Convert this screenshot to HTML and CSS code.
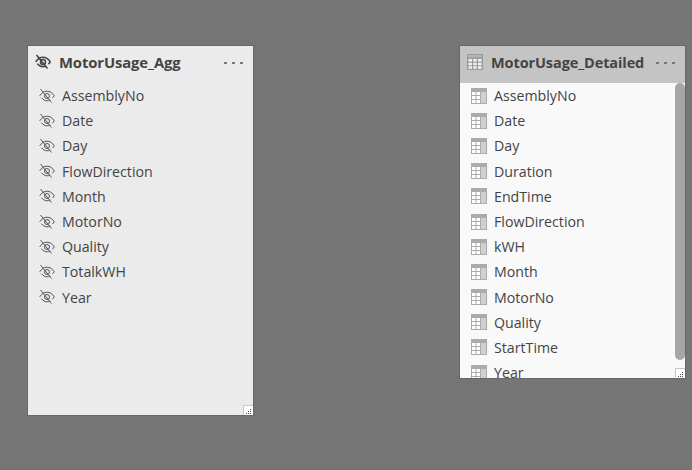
FILE: index.html
```html
<!DOCTYPE html>
<html lang="en">
<head>
  <meta charset="UTF-8">
  <title>Model view</title>
  <link rel="stylesheet" href="styles.css">
</head>
<body>

<svg class="defs" width="0" height="0">
  <symbol id="eye" viewBox="0 0 16 16">
    <path d="M.7 7.800C2.800 4.600 5.300 3.200 8 3.200s5.200 1.400 7.300 4.600c-.6.9-1.200 1.600-1.900 2.300M2.300 9.700C4 11.700 6 12.800 8 12.800c1.200 0 2.300-.3 3.300-.9" fill="none" stroke="currentColor"/>
    <circle cx="8" cy="8" r="2.500" fill="none" stroke="currentColor"/>
    <path d="M1.500 1L12.500 14.500" fill="none" stroke="currentColor"/>
  </symbol>
  <symbol id="grid" viewBox="0 0 16 16">
    <path d="M0 0h16v16H0z" fill="#ababab"/>
    <path d="M1 4h3.500v3H1zM5.500 4H9v3H5.500zM1 8h3.500v3H1zM5.500 8H9v3H5.500zM1 12h3.500v3H1zM5.500 12H9v3H5.500z" fill="#fff"/>
    <path d="M10 4h5v11h-5z" fill="#d0d0d0"/>
  </symbol>
  <symbol id="table" viewBox="0 0 16 16">
    <path d="M0 0h16v16H0z" fill="#9c9c9c"/>
    <path d="M1 1h14v2.500H1z" fill="#b4b4b4"/>
    <path d="M1.500 5h3.500v2.500H1.500zM6.300 5h3.400v2.500H6.300zM11 5h3.500v2.500H11zM1.500 8.700h3.500v2.500H1.500zM6.300 8.700h3.400v2.500H6.300zM11 8.700h3.500v2.500H11zM1.500 12.300h3.500v2.500H1.500zM6.300 12.300h3.400v2.500H6.300zM11 12.300h3.500v2.500H11z" fill="#f2f2f2"/>
  </symbol>
  <symbol id="dotgrip" viewBox="0 0 6 6">
    <path d="M4 1h1v1H4zM2 3h1v1H2zM4 3h1v1H4zM0 5h1v1H0zM2 5h1v1H2zM4 5h1v1H4z" fill="#444"/>
  </symbol>
</svg>

<div class="card card-agg">
  <div class="card-head">
    <svg class="head-icon bold"><use href="#eye"/></svg>
    <span class="card-title">MotorUsage_Agg</span>
    <span class="dots"><i></i><i></i><i></i></span>
  </div>
  <ul class="fields">
    <li><svg class="field-icon eye"><use href="#eye"/></svg>AssemblyNo</li>
    <li><svg class="field-icon eye"><use href="#eye"/></svg>Date</li>
    <li><svg class="field-icon eye"><use href="#eye"/></svg>Day</li>
    <li><svg class="field-icon eye"><use href="#eye"/></svg>FlowDirection</li>
    <li><svg class="field-icon eye"><use href="#eye"/></svg>Month</li>
    <li><svg class="field-icon eye"><use href="#eye"/></svg>MotorNo</li>
    <li><svg class="field-icon eye"><use href="#eye"/></svg>Quality</li>
    <li><svg class="field-icon eye"><use href="#eye"/></svg>TotalkWH</li>
    <li><svg class="field-icon eye"><use href="#eye"/></svg>Year</li>
  </ul>
  <span class="grip"><svg><use href="#dotgrip"/></svg></span>
</div>

<div class="card card-detail">
  <div class="card-head">
    <svg class="head-icon"><use href="#table"/></svg>
    <span class="card-title">MotorUsage_Detailed</span>
    <span class="dots"><i></i><i></i><i></i></span>
  </div>
  <ul class="fields">
    <li><svg class="field-icon"><use href="#grid"/></svg>AssemblyNo</li>
    <li><svg class="field-icon"><use href="#grid"/></svg>Date</li>
    <li><svg class="field-icon"><use href="#grid"/></svg>Day</li>
    <li><svg class="field-icon"><use href="#grid"/></svg>Duration</li>
    <li><svg class="field-icon"><use href="#grid"/></svg>EndTime</li>
    <li><svg class="field-icon"><use href="#grid"/></svg>FlowDirection</li>
    <li><svg class="field-icon"><use href="#grid"/></svg>kWH</li>
    <li><svg class="field-icon"><use href="#grid"/></svg>Month</li>
    <li><svg class="field-icon"><use href="#grid"/></svg>MotorNo</li>
    <li><svg class="field-icon"><use href="#grid"/></svg>Quality</li>
    <li><svg class="field-icon"><use href="#grid"/></svg>StartTime</li>
    <li><svg class="field-icon"><use href="#grid"/></svg>Year</li>
  </ul>
  <span class="thumb"></span>
  <span class="grip"><svg><use href="#dotgrip"/></svg></span>
</div>

</body>
</html>
```

FILE: styles.css
```css
* {
  margin: 0;
  padding: 0;
  box-sizing: border-box;
}
html, body {
  height: 100%;
}
body {
  position: relative;
  overflow: hidden;
  background: #757575;
  font-family: 'Open Sans', 'Noto Sans', sans-serif;
  color: #444;
}
.defs {
  position: absolute;
}
.card {
  position: absolute;
  top: 46px;
  width: 225px;
  overflow: hidden;
  box-shadow: 0 0 0 1px #686868;
}
.card-agg {
  left: 28px;
  height: 369px;
  background: #ebebeb;
}
.card-detail {
  left: 460px;
  height: 332px;
  background: #f9f9f9;
}
.card-head {
  display: flex;
  align-items: center;
  height: 37px;
  padding: 0 10px 5px 7px;
}
.card-detail .card-head {
  background: #c4c4c4;
}
.head-icon {
  width: 16px;
  height: 16px;
  flex: none;
  margin-right: 8px;
  color: #444;
}
.head-icon.bold {
  stroke-width: 1.500;
}
.card-title {
  flex: 1;
  font-size: 14.500px;
  font-weight: 700;
  letter-spacing: -0.1px;
  white-space: nowrap;
}
.card-agg .card-title {
  font-size: 14.800px;
}
.dots {
  display: flex;
  gap: 5px;
  margin-top: 2px;
}
.dots i {
  width: 3px;
  height: 2px;
  background: #777;
}
.fields {
  list-style: none;
}
.fields li {
  display: flex;
  align-items: center;
  height: 25.200px;
  padding-left: 11px;
  font-size: 14.200px;
  white-space: nowrap;
}
.field-icon {
  width: 16px;
  height: 16px;
  flex: none;
  margin-right: 7px;
}
.field-icon.eye {
  color: #555;
}
.thumb {
  position: absolute;
  top: 37px;
  right: 0;
  width: 10px;
  height: 277px;
  background: #a6a6a6;
  border-radius: 5px;
}
.grip {
  position: absolute;
  right: 0;
  bottom: 0;
  width: 10px;
  height: 10px;
  background: #fff;
  border: 1px solid #c8c8c8;
  border-width: 1px 0 0 1px;
}
.grip svg {
  position: absolute;
  right: 1px;
  bottom: 1px;
  width: 6px;
  height: 6px;
}
```
